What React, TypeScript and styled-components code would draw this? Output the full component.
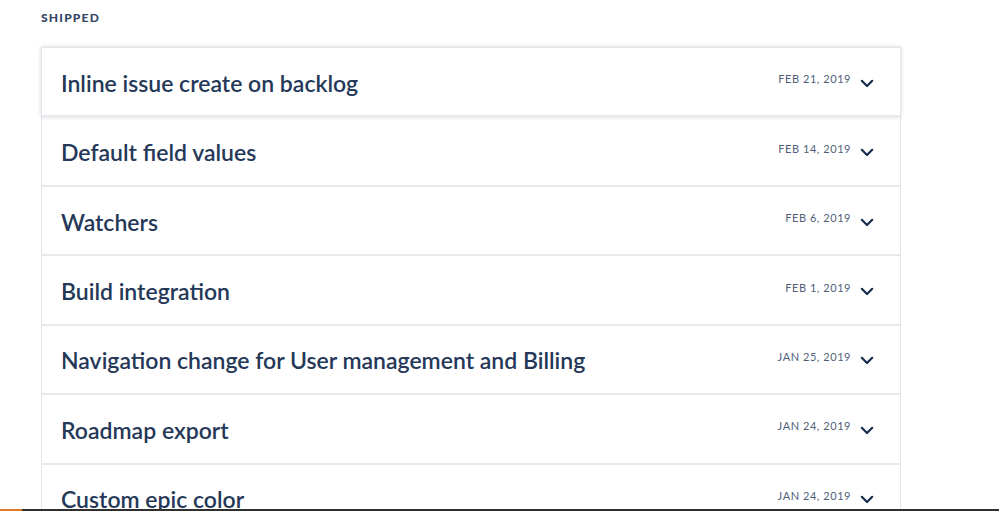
import * as React from "react";
import styled, { createGlobalStyle } from "styled-components";

const GlobalStyle = createGlobalStyle`
  html, body {
    margin: 0;
    padding: 0;
    background: #ffffff;
    overflow: hidden;
  }
  body {
    font-family: "Lato", "Open Sans", sans-serif;
  }
`;

const Page = styled.div`
  height: 511px;
  padding: 10px 0 0 41px;
  box-sizing: border-box;
  overflow: hidden;
`;

const SectionLabel = styled.div`
  font-family: "Lato", sans-serif;
  font-weight: 900;
  font-size: 12px;
  letter-spacing: 1.2px;
  color: #344563;
  text-transform: uppercase;
  height: 37px;
`;

const List = styled.div`
  width: 860px;
`;

const Row = styled.div<{ $raised?: boolean }>`
  display: flex;
  align-items: center;
  height: 67.45px;
  padding: 0 26px 0 19px;
  background: #ffffff;
  border-left: 1px solid #e4e5e8;
  border-right: 1px solid #e4e5e8;
  border-bottom: 2px solid #e8e9ec;
  box-sizing: content-box;
  position: relative;
  box-shadow: ${(p) =>
    p.$raised ? "0 0 4px rgba(9, 30, 66, 0.18)" : "none"};
  z-index: ${(p) => (p.$raised ? 1 : 0)};
  ${(p) => (p.$raised ? "border-top: 1px solid #e4e5e8;" : "")}
`;

const Title = styled.div`
  flex: 1;
  font-family: "Lato", sans-serif;
  font-weight: 600;
  font-size: 23px;
  color: #253858;
  padding-top: 2px;
`;

const Meta = styled.div`
  display: flex;
  align-items: center;
  gap: 9px;
`;

const DateText = styled.span`
  font-family: "Lato", sans-serif;
  font-size: 11px;
  letter-spacing: 0.55px;
  color: #505f79;
  margin-top: -6px;
`;

const Chevron = styled.svg`
  width: 14px;
  height: 14px;
  color: #172b4d;
  margin-top: 2px;
`;

const BottomBar = styled.div`
  position: fixed;
  left: 0;
  right: 0;
  bottom: 0;
  height: 2px;
  background: #2f2f2f;
`;

const BottomAccent = styled.div`
  width: 22px;
  height: 100%;
  background: #e07b24;
`;

const items = [
  { title: "Inline issue create on backlog", date: "FEB 21, 2019" },
  { title: "Default field values", date: "FEB 14, 2019" },
  { title: "Watchers", date: "FEB 6, 2019" },
  { title: "Build integration", date: "FEB 1, 2019" },
  {
    title: "Navigation change for User management and Billing",
    date: "JAN 25, 2019",
  },
  { title: "Roadmap export", date: "JAN 24, 2019" },
  { title: "Custom epic color", date: "JAN 24, 2019" },
];

export default function App() {
  return (
    <>
      <GlobalStyle />
      <Page>
        <SectionLabel>Shipped</SectionLabel>
        <List>
          {items.map((item, i) => (
            <Row key={item.title} $raised={i === 0}>
              <Title>{item.title}</Title>
              <Meta>
                <DateText>{item.date}</DateText>
                <Chevron viewBox="0 0 14 14" fill="none">
                  <path
                    d="M1.8 4.8 L7 10 L12.2 4.8"
                    stroke="currentColor"
                    strokeWidth="2.2"
                    strokeLinecap="round"
                    strokeLinejoin="round"
                  />
                </Chevron>
              </Meta>
            </Row>
          ))}
        </List>
      </Page>
      <BottomBar>
        <BottomAccent />
      </BottomBar>
    </>
  );
}
